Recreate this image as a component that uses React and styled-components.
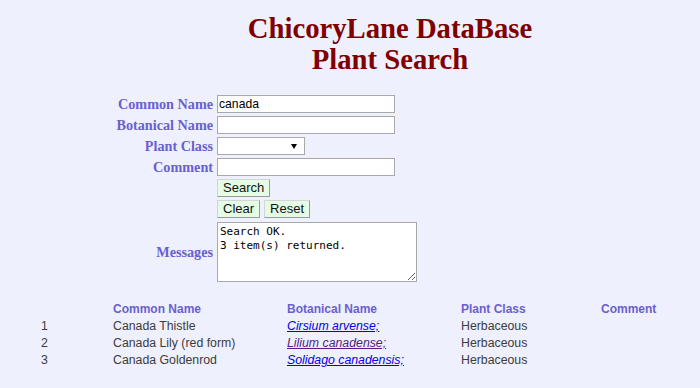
import React from "react";
import styled, { createGlobalStyle } from "styled-components";

const Global = createGlobalStyle`
  html, body { margin: 0; padding: 0; }
  body {
    margin: 8px;
    background: #eef0fd;
    font-family: "Liberation Serif", "Times New Roman", serif;
  }
`;

const Header = styled.header`
  padding-left: 80px;
  margin: 5px 0 20px;
  text-align: center;
  color: #800000;
  font-family: "Liberation Serif", "Times New Roman", serif;
  font-weight: bold;
  font-size: 28.7px;
  line-height: 31px;
`;

const HeaderLine = styled.div``;

const Form = styled.form`
  display: grid;
  grid-template-columns: 205px auto;
  column-gap: 4px;
  row-gap: 3px;
  align-items: center;
  justify-items: start;
`;

const Label = styled.label`
  justify-self: end;
  color: #6a5fcf;
  font-family: "Liberation Serif", "Times New Roman", serif;
  font-weight: bold;
  font-size: 14.2px;
  line-height: 18px;
  white-space: nowrap;
`;

const Spacer = styled.span``;

const TextInput = styled.input`
  box-sizing: border-box;
  width: 178px;
  height: 18px;
  margin: 0;
  padding: 0 1px;
  border: 1px solid #a9a9a9;
  background: #fff;
  font-family: "Liberation Sans", Arial, sans-serif;
  font-size: 12.2px;
  color: #000;
  outline: none;
`;

const SelectBox = styled.div`
  box-sizing: border-box;
  width: 88px;
  height: 18px;
  border: 1px solid #a9a9a9;
  background: #fff;
  position: relative;
`;

const Arrow = styled.span`
  position: absolute;
  right: 7px;
  top: 6px;
  width: 0;
  height: 0;
  border-left: 3px solid transparent;
  border-right: 3px solid transparent;
  border-top: 5px solid #000;
`;

const ButtonRow = styled.div`
  display: flex;
  gap: 4px;
`;

const Button = styled.button`
  box-sizing: border-box;
  height: 18px;
  margin: 0;
  padding: 0 5px;
  background: #e4fbe4;
  border: 1px solid #d4d4d4;
  border-right-color: #9a9a9a;
  border-bottom-color: #9a9a9a;
  font-family: "Liberation Sans", Arial, sans-serif;
  font-size: 13px;
  line-height: 16px;
  color: #111;
`;

const MessageLabel = styled(Label)`
  align-self: center;
`;

const Messages = styled.textarea`
  box-sizing: border-box;
  width: 200px;
  height: 60px;
  margin: 1px 0 0;
  padding: 2px 2px;
  border: 1px solid #a9a9a9;
  background: #fff;
  font-family: "DejaVu Sans Mono", "Liberation Mono", monospace;
  font-size: 11px;
  line-height: 14px;
  color: #000;
  resize: both;
  outline: none;
`;

const Table = styled.div`
  display: grid;
  grid-template-columns: 105px 174px 174px 140px 1fr;
  margin-top: 18px;
  font-family: "Liberation Sans", Arial, sans-serif;
  font-size: 12.3px;
  line-height: 17px;
`;

const HeadCell = styled.div`
  color: #6a5fcf;
  font-weight: bold;
  font-size: 12px;
  line-height: 18px;
`;

const Cell = styled.div`
  color: #3c3c3c;
  padding-left: ${(p) => p.$indent || 0}px;
`;

const PlantLink = styled.a`
  font-style: italic;
  color: ${(p) => (p.$visited ? "#551a8b" : "#0000ee")};
  text-decoration: underline;
`;

const rows = [
  { n: 1, common: "Canada Thistle", botanical: "Cirsium arvense;", cls: "Herbaceous" },
  { n: 2, common: "Canada Lily (red form)", botanical: "Lilium canadense;", cls: "Herbaceous", visited: true },
  { n: 3, common: "Canada Goldenrod", botanical: "Solidago canadensis;", cls: "Herbaceous" },
];

export default function App() {
  return (
    <>
      <Global />
      <Header>
        <HeaderLine>ChicoryLane DataBase</HeaderLine>
        <HeaderLine>Plant Search</HeaderLine>
      </Header>
      <Form onSubmit={(e) => e.preventDefault()}>
        <Label>Common Name</Label>
        <TextInput defaultValue="canada" />
        <Label>Botanical Name</Label>
        <TextInput />
        <Label>Plant Class</Label>
        <SelectBox>
          <Arrow />
        </SelectBox>
        <Label>Comment</Label>
        <TextInput />
        <Spacer />
        <ButtonRow>
          <Button type="button">Search</Button>
        </ButtonRow>
        <Spacer />
        <ButtonRow>
          <Button type="button">Clear</Button>
          <Button type="button">Reset</Button>
        </ButtonRow>
        <MessageLabel>Messages</MessageLabel>
        <Messages readOnly defaultValue={"Search OK.\n3 item(s) returned."} />
      </Form>
      <Table>
        <HeadCell />
        <HeadCell>Common Name</HeadCell>
        <HeadCell>Botanical Name</HeadCell>
        <HeadCell>Plant Class</HeadCell>
        <HeadCell>Comment</HeadCell>
        {rows.map((r) => (
          <React.Fragment key={r.n}>
            <Cell $indent={33}>{r.n}</Cell>
            <Cell>{r.common}</Cell>
            <Cell>
              <PlantLink href="#" $visited={r.visited}>{r.botanical}</PlantLink>
            </Cell>
            <Cell>{r.cls}</Cell>
            <Cell />
          </React.Fragment>
        ))}
      </Table>
    </>
  );
}
